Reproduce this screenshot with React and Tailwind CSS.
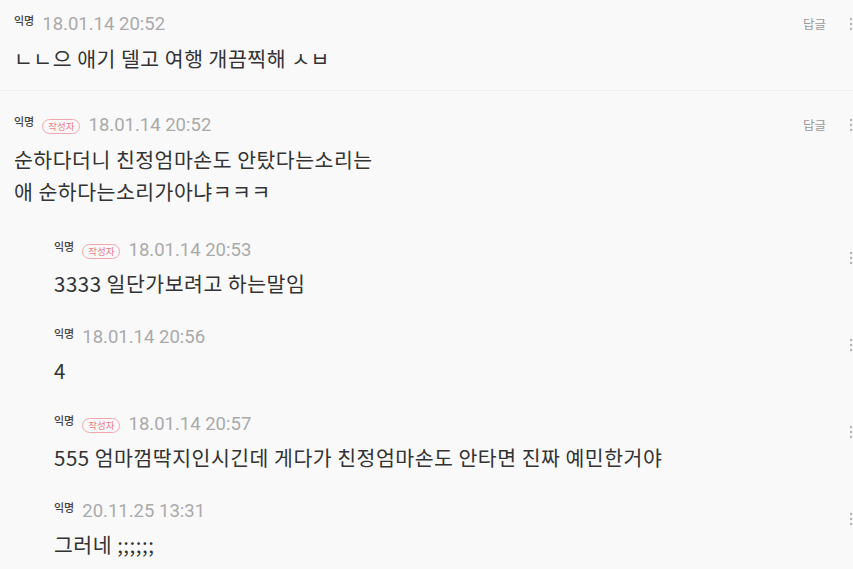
const comments = [
  {
    id: 1,
    author: false,
    date: "18.01.14 20:52",
    lines: ["ㄴㄴ으 애기 델고 여행 개끔찍해 ㅅㅂ"],
    replies: [],
  },
  {
    id: 2,
    author: true,
    date: "18.01.14 20:52",
    lines: ["순하다더니 친정엄마손도 안탔다는소리는", "애 순하다는소리가아냐ㅋㅋㅋ"],
    replies: [
      { id: 3, author: true, date: "18.01.14 20:53", text: "3333 일단가보려고 하는말임" },
      { id: 4, author: false, date: "18.01.14 20:56", text: "4" },
      {
        id: 5,
        author: true,
        date: "18.01.14 20:57",
        text: "555 엄마껌딱지인시긴데 게다가 친정엄마손도 안타면 진짜 예민한거야",
      },
      { id: 6, author: false, date: "20.11.25 13:31", text: "그러네 ;;;;;;" },
    ],
  },
];

const Kebab = () => (
  <svg width="5" height="14" viewBox="0 0 5 14" className="shrink-0">
    <circle cx="3" cy="2" r="1.2" fill="#b5b5b5" />
    <circle cx="3" cy="7" r="1.2" fill="#b5b5b5" />
    <circle cx="3" cy="12" r="1.2" fill="#b5b5b5" />
  </svg>
);

const Meta = ({ author, date }) => (
  <div className="flex items-start h-[24px]">
    <span className="text-[11px] leading-[14px] font-medium text-[#444] mt-[1px] font-['Noto_Sans_CJK_KR',sans-serif]">
      익명
    </span>
    {author && (
      <span className="ml-[8px] mt-[6px] h-[15px] px-[5px] rounded-full border border-[#f2a5ad] text-[#ec7b86] text-[9.5px] leading-[13px] font-['Noto_Sans_CJK_KR',sans-serif]">
        작성자
      </span>
    )}
    <span className="ml-[8px] text-[18.5px] leading-[24px] text-[#aaaaaa] font-['Roboto',sans-serif]">
      {date}
    </span>
  </div>
);

const App = () => {
  return (
    <div className="min-h-screen w-full bg-[#f9f9f9] overflow-hidden font-['Noto_Sans_CJK_KR',sans-serif]">
      {comments.map((c, i) => (
        <div
          key={c.id}
          className={
            i === 0
              ? "pl-[14px] pt-[12px] pb-[16px] border-b border-[#efefef]"
              : "pl-[14px] pt-[22px]"
          }
        >
          <div className="flex justify-between">
            <div className="flex-1">
              <Meta author={c.author} date={c.date} />
              <div className="mt-[6px] text-[20.5px] leading-[32px] tracking-[0.5px] text-[#333]">
                {c.lines.map((l) => (
                  <div key={l}>{l}</div>
                ))}
              </div>
            </div>
            <div className="flex items-start h-[24px] pt-[5px]">
              <span className="text-[12.5px] leading-[14px] text-[#9a9a9a]">답글</span>
              <div className="ml-[22px]">
                <Kebab />
              </div>
            </div>
          </div>

          {c.replies.length > 0 && (
            <div className="pl-[40px] pt-[31px]">
              {c.replies.map((r) => (
                <div key={r.id} className="flex justify-between mb-[26px]">
                  <div className="flex-1">
                    <Meta author={r.author} date={r.date} />
                    <div className="mt-[5px] text-[20.5px] leading-[32px] tracking-[0.5px] text-[#333]">
                      {r.text}
                    </div>
                  </div>
                  <div className="pt-[13px]">
                    <Kebab />
                  </div>
                </div>
              ))}
            </div>
          )}
        </div>
      ))}
    </div>
  );
};

export default App;
